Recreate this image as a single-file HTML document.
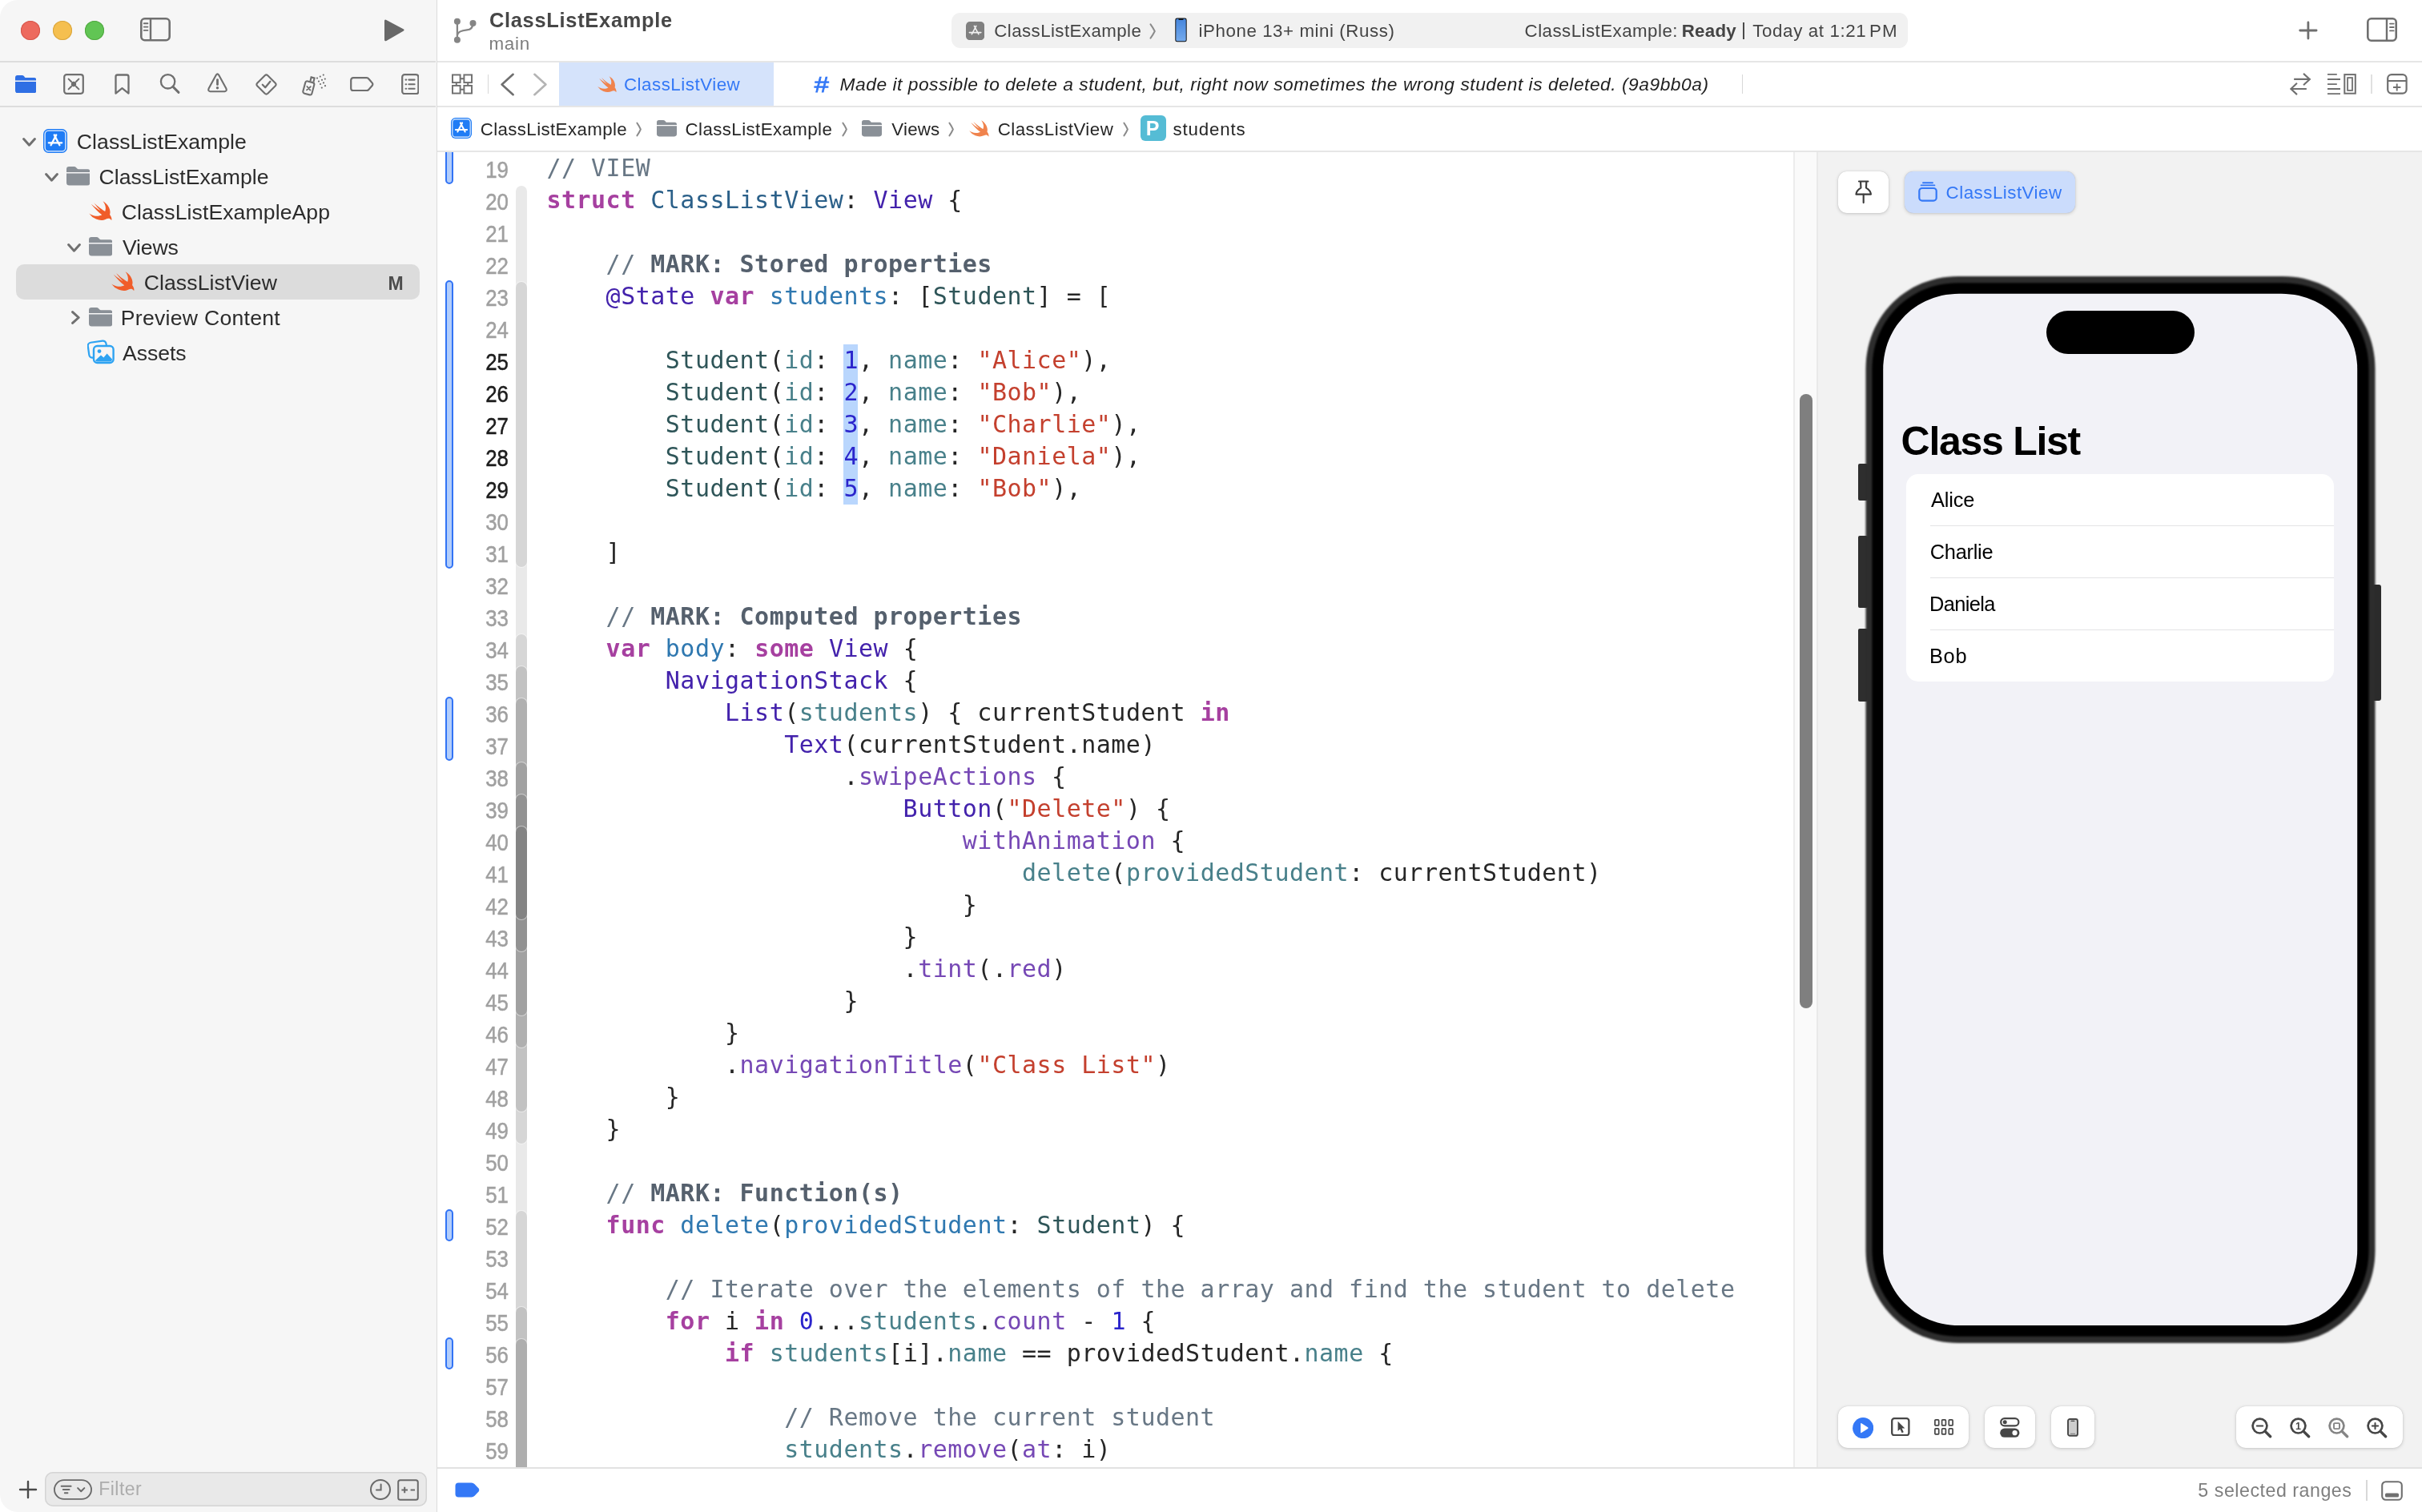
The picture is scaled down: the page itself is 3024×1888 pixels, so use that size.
<!DOCTYPE html><html lang="en"><head><meta charset="utf-8"><title>ClassListExample — ClassListView.swift</title>
<style>html,body{margin:0;padding:0}body{width:3024px;height:1888px;position:relative;overflow:hidden;background:#fff;font-family:"Liberation Sans", sans-serif;-webkit-font-smoothing:antialiased}#win{position:absolute;left:0;top:0;width:3024px;height:1888px;overflow:hidden;border-radius:22px;background:#fff;opacity:.9999}.code{font-family:"DejaVu Sans Mono", "Liberation Mono", monospace}.k{color:#a640a0;font-weight:bold}.c{color:#687785}.m{color:#55606d;font-weight:bold}.s{color:#c4402e}.n{color:#2b25cc}.td{color:#2b6089}.d{color:#2f78b0}.pc{color:#2e5558}.pf{color:#48808a}.oc{color:#4322ac}.of{color:#7648b5}</style></head><body><div id="win">
<div style="position:absolute;left:0px;top:0px;width:545px;height:1888px;background:#f6f6f6"></div>
<div style="position:absolute;left:544.6px;top:0px;width:1.5px;height:1888px;background:#dcdcdc"></div>
<div style="position:absolute;left:0px;top:76px;width:544px;height:2px;background:#dddddd"></div>
<div style="position:absolute;left:0px;top:132px;width:544px;height:2px;background:#dddddd"></div>
<div style="position:absolute;left:25.700000000000003px;top:25.700000000000003px;width:24px;height:24px;border-radius:50%;background:#ed6a5e;box-shadow:inset 0 0 0 1px #d5574c"></div>
<div style="position:absolute;left:65.8px;top:25.700000000000003px;width:24px;height:24px;border-radius:50%;background:#f5bf4f;box-shadow:inset 0 0 0 1px #d9a53e"></div>
<div style="position:absolute;left:105.8px;top:25.700000000000003px;width:24px;height:24px;border-radius:50%;background:#61c554;box-shadow:inset 0 0 0 1px #52a842"></div>
<svg style="position:absolute;left:175.3px;top:22.3px" width="38" height="29.5" viewBox="0 0 38 29.5" ><rect x="1.3" y="1.3" width="35.4" height="26.9" rx="4.4" fill="none" stroke="#707070" stroke-width="2.6"/><path d="M13 1.3V28.2" stroke="#707070" stroke-width="2.4"/><path d="M4.8 7.2H9.4M4.8 11.6H9.4M4.8 15.9H9.4" stroke="#707070" stroke-width="1.9" stroke-linecap="round"/></svg>
<svg style="position:absolute;left:478px;top:23px" width="29" height="30" viewBox="0 0 29 30" ><path d="M2 3.2Q2 0.6 4.4 1.9L25.6 13.2Q27.6 14.4 25.6 15.7L4.4 27.9Q2 29.2 2 26.6Z" fill="#686868"/></svg>
<svg style="position:absolute;left:18.8px;top:93.6px" width="26.4" height="22.4" viewBox="0 0 30 24" preserveAspectRatio="none"><path fill="#2f6fe4" d="M0 3.2Q0 0 3.2 0H9.6Q11.4 0 12.4 1.2L13.6 2.6Q14.2 3.2 15.2 3.2H26.8Q30 3.2 30 6.4V7H0Z"/><path fill="#2f6fe4" d="M0 8.6H30V20.4Q30 24 26.4 24H3.6Q0 24 0 20.4Z"/></svg>
<svg style="position:absolute;left:79px;top:91.8px" width="26" height="26" viewBox="0 0 26 26" ><rect x="1.2" y="1.2" width="23.6" height="23.6" rx="3" fill="none" stroke="#6f6f6f" stroke-width="2.2"/><path d="M6.6 6.6 10 10M19.4 6.6 16 10M6.6 19.4 10 16M19.4 19.4 16 16" stroke="#6f6f6f" stroke-width="2" stroke-linecap="round"/><circle cx="13" cy="13" r="3.2" fill="#6f6f6f"/></svg>
<svg style="position:absolute;left:142.6px;top:91.8px" width="19" height="27" viewBox="0 0 19 27" ><path d="M1.5 3.8Q1.5 1.5 3.8 1.5H15.2Q17.5 1.5 17.5 3.8V24.6L9.5 18.2 1.5 24.6Z" fill="none" stroke="#6f6f6f" stroke-width="2.3" stroke-linejoin="round"/></svg>
<svg style="position:absolute;left:199px;top:91.4px" width="27" height="27" viewBox="0 0 27 27" ><circle cx="10.6" cy="10.8" r="8.7" fill="none" stroke="#6f6f6f" stroke-width="2.3"/><path d="M17 17.4 24 24.4" stroke="#6f6f6f" stroke-width="2.9" stroke-linecap="round"/></svg>
<svg style="position:absolute;left:259.4px;top:91.4px" width="25" height="25" viewBox="0 0 25 25" ><path d="M10.9 2.6Q12.5 0.2 14.1 2.6L23.4 19.6Q24.6 22.9 21.6 23.2H3.4Q0.4 22.9 1.6 19.6Z" fill="none" stroke="#6f6f6f" stroke-width="2.1" stroke-linejoin="round"/><path d="M12.5 8.6V14.6" stroke="#6f6f6f" stroke-width="2.8" stroke-linecap="round"/><circle cx="12.5" cy="18.8" r="1.7" fill="#6f6f6f"/></svg>
<svg style="position:absolute;left:318.6px;top:91.6px" width="27" height="27" viewBox="0 0 27 27" ><path d="M11.7 2.2Q13.5 0.6 15.3 2.2L24.8 11.7Q26.4 13.5 24.8 15.3L15.3 24.8Q13.5 26.4 11.7 24.8L2.2 15.3Q0.6 13.5 2.2 11.7Z" fill="none" stroke="#6f6f6f" stroke-width="2.1"/><path d="M8.8 13.8 12.2 17.2 18.4 9.8" fill="none" stroke="#6f6f6f" stroke-width="2.3" stroke-linecap="round" stroke-linejoin="round"/></svg>
<svg style="position:absolute;left:377px;top:91px" width="32" height="29" viewBox="0 0 32 29" ><g fill="none" stroke="#6f6f6f" stroke-width="2.1"><rect x="2.6" y="11" width="11.4" height="15.8" rx="2.4" transform="rotate(15 8.3 19)"/><path d="M10.4 10.4 11.6 5.4 15.6 6.4 14.4 11.4"/></g><path d="M6.4 17 10.4 21.6M10.8 17.2 6 21.4" stroke="#6f6f6f" stroke-width="1.8" stroke-linecap="round"/><g fill="#6f6f6f"><circle cx="19" cy="6.6" r="1.1"/><circle cx="22.8" cy="4.6" r="1.1"/><circle cx="26.8" cy="2.6" r="1.1"/><circle cx="21" cy="10.6" r="1.1"/><circle cx="25" cy="8.8" r="1.1"/><circle cx="28.8" cy="7.6" r="1.1"/><circle cx="23" cy="14" r="1.1"/><circle cx="27" cy="12.4" r="1.1"/><circle cx="24.8" cy="18.6" r="1.1"/><circle cx="29" cy="16.2" r="1.1"/></g></svg>
<svg style="position:absolute;left:436.8px;top:95.8px" width="30" height="18.4" viewBox="0 0 30 18.4" ><path d="M4.2 1.2H20.6Q22.6 1.2 23.6 2.8L27.8 7.6Q28.9 9.2 27.8 10.8L23.6 15.6Q22.6 17.2 20.6 17.2H4.2Q1.2 17.2 1.2 14.2V4.2Q1.2 1.2 4.2 1.2Z" fill="none" stroke="#6f6f6f" stroke-width="2.2"/></svg>
<svg style="position:absolute;left:500.6px;top:91.8px" width="22.6" height="26.4" viewBox="0 0 22.6 26.4" ><rect x="1.2" y="1.2" width="20.2" height="24" rx="3" fill="none" stroke="#6f6f6f" stroke-width="2.2"/><path d="M9.4 7.6H16.6M9.4 13.2H16.6M9.4 18.8H16.6" stroke="#6f6f6f" stroke-width="2.1" stroke-linecap="round"/><path d="M5.6 7.6H6.2M5.6 13.2H6.2M5.6 18.8H6.2" stroke="#6f6f6f" stroke-width="2.1" stroke-linecap="round"/></svg>
<div style="position:absolute;left:20px;top:330px;width:504px;height:44px;background:#dcdcdc;border-radius:10px"></div>
<svg style="position:absolute;left:27.5px;top:171.5px" width="17" height="11" viewBox="0 0 17 11" ><path d="M1.6 1.6 8.5 9.2 15.4 1.6" fill="none" stroke="#707070" stroke-width="3" stroke-linecap="round" stroke-linejoin="round"/></svg>
<svg style="position:absolute;left:54px;top:161px" width="30" height="30" viewBox="0 0 30 30" ><rect x="0" y="0" width="30" height="30" rx="6.5" fill="#1f7cf5"/><rect x="2.1" y="2.1" width="25.8" height="25.8" rx="4.6" fill="none" stroke="#ffffff" stroke-width="1.3" opacity=".9"/><g stroke="#fff" stroke-width="2.3" stroke-linecap="round" fill="none"><path d="M16.3 7.4 9.6 20.2"/><path d="M13.7 7.4 20.4 20.2"/><path d="M6.8 17.3H23.2"/></g></svg>
<div  style="position:absolute;left:95.87px;top:164px;font-size:26.6px;line-height:26.6px;color:#2c2c2c;white-space:pre;letter-spacing:0.044px;">ClassListExample</div>
<svg style="position:absolute;left:55.5px;top:215.5px" width="17" height="11" viewBox="0 0 17 11" ><path d="M1.6 1.6 8.5 9.2 15.4 1.6" fill="none" stroke="#707070" stroke-width="3" stroke-linecap="round" stroke-linejoin="round"/></svg>
<svg style="position:absolute;left:82.6px;top:208.4px" width="29.4" height="23.6" viewBox="0 0 30 24" preserveAspectRatio="none"><path fill="#8a9097" d="M0 3.2Q0 0 3.2 0H9.6Q11.4 0 12.4 1.2L13.6 2.6Q14.2 3.2 15.2 3.2H26.8Q30 3.2 30 6.4V7H0Z"/><path fill="#8a9097" d="M0 8.6H30V20.4Q30 24 26.4 24H3.6Q0 24 0 20.4Z"/></svg>
<div  style="position:absolute;left:123.47px;top:208px;font-size:26.6px;line-height:26.6px;color:#2c2c2c;white-space:pre;letter-spacing:0.044px;">ClassListExample</div>
<svg style="position:absolute;left:111px;top:251px" width="29" height="25" viewBox="2.3 3.3 18.6 17.0" preserveAspectRatio="none"><path fill="#f05d2a" d="M13.543 3.41c4.114 2.47 6.545 7.162 5.549 11.131-.024.093-.05.181-.076.272l.002.001c2.062 2.538 1.5 5.258 1.236 4.745-1.072-2.086-3.066-1.568-4.088-1.043a6.803 6.803 0 0 1-.281.158l-.02.012-.002.002c-2.115 1.123-4.957 1.205-7.812-.022a12.568 12.568 0 0 1-5.64-4.838c.649.48 1.35.902 2.097 1.252 3.019 1.414 6.051 1.311 8.197-.002C9.651 12.73 7.101 9.67 5.146 7.191a10.628 10.628 0 0 1-1.005-1.384c2.34 2.142 6.038 4.83 7.365 5.576C8.69 8.408 6.208 4.743 6.324 4.86c4.436 4.47 8.528 6.996 8.528 6.996.154.085.27.154.36.213.085-.215.16-.437.224-.668.708-2.588-.09-5.548-1.893-7.992z"/></svg>
<div  style="position:absolute;left:151.67px;top:252px;font-size:26.6px;line-height:26.6px;color:#2c2c2c;white-space:pre;letter-spacing:0.095px;">ClassListExampleApp</div>
<svg style="position:absolute;left:83.5px;top:303.5px" width="17" height="11" viewBox="0 0 17 11" ><path d="M1.6 1.6 8.5 9.2 15.4 1.6" fill="none" stroke="#707070" stroke-width="3" stroke-linecap="round" stroke-linejoin="round"/></svg>
<svg style="position:absolute;left:110.8px;top:296.4px" width="29.4" height="23.6" viewBox="0 0 30 24" preserveAspectRatio="none"><path fill="#8a9097" d="M0 3.2Q0 0 3.2 0H9.6Q11.4 0 12.4 1.2L13.6 2.6Q14.2 3.2 15.2 3.2H26.8Q30 3.2 30 6.4V7H0Z"/><path fill="#8a9097" d="M0 8.6H30V20.4Q30 24 26.4 24H3.6Q0 24 0 20.4Z"/></svg>
<div  style="position:absolute;left:152.93px;top:296px;font-size:26.6px;line-height:26.6px;color:#2c2c2c;white-space:pre;letter-spacing:-0.123px;">Views</div>
<svg style="position:absolute;left:139px;top:339px" width="29" height="25" viewBox="2.3 3.3 18.6 17.0" preserveAspectRatio="none"><path fill="#f05d2a" d="M13.543 3.41c4.114 2.47 6.545 7.162 5.549 11.131-.024.093-.05.181-.076.272l.002.001c2.062 2.538 1.5 5.258 1.236 4.745-1.072-2.086-3.066-1.568-4.088-1.043a6.803 6.803 0 0 1-.281.158l-.02.012-.002.002c-2.115 1.123-4.957 1.205-7.812-.022a12.568 12.568 0 0 1-5.64-4.838c.649.48 1.35.902 2.097 1.252 3.019 1.414 6.051 1.311 8.197-.002C9.651 12.73 7.101 9.67 5.146 7.191a10.628 10.628 0 0 1-1.005-1.384c2.34 2.142 6.038 4.83 7.365 5.576C8.69 8.408 6.208 4.743 6.324 4.86c4.436 4.47 8.528 6.996 8.528 6.996.154.085.27.154.36.213.085-.215.16-.437.224-.668.708-2.588-.09-5.548-1.893-7.992z"/></svg>
<div  style="position:absolute;left:179.67px;top:340px;font-size:26.6px;line-height:26.6px;color:#2c2c2c;white-space:pre;letter-spacing:0.095px;">ClassListView</div>
<div  style="position:absolute;left:484.5px;top:343px;font-size:23px;line-height:23px;color:#4d4d4d;white-space:pre;font-weight:700;">M</div>
<svg style="position:absolute;left:88.5px;top:388px" width="11" height="17" viewBox="0 0 11 17" ><path d="M1.6 1.6 9.2 8.5 1.6 15.4" fill="none" stroke="#707070" stroke-width="3" stroke-linecap="round" stroke-linejoin="round"/></svg>
<svg style="position:absolute;left:110.8px;top:384.4px" width="29.4" height="23.6" viewBox="0 0 30 24" preserveAspectRatio="none"><path fill="#8a9097" d="M0 3.2Q0 0 3.2 0H9.6Q11.4 0 12.4 1.2L13.6 2.6Q14.2 3.2 15.2 3.2H26.8Q30 3.2 30 6.4V7H0Z"/><path fill="#8a9097" d="M0 8.6H30V20.4Q30 24 26.4 24H3.6Q0 24 0 20.4Z"/></svg>
<div  style="position:absolute;left:150.87px;top:384px;font-size:26.6px;line-height:26.6px;color:#2c2c2c;white-space:pre;letter-spacing:0.27px;">Preview Content</div>
<svg style="position:absolute;left:109px;top:424px" width="34" height="31" viewBox="0 0 34 31" ><rect x="1.4" y="2.6" width="23" height="19" rx="4" fill="#f6f6f6" stroke="#2ea3f2" stroke-width="2.2" transform="rotate(-8 13 12)"/><rect x="8" y="8" width="24.6" height="21" rx="4.4" fill="#f6f6f6" stroke="#2ea3f2" stroke-width="2.4"/><circle cx="15" cy="14.6" r="2.4" fill="#2ea3f2"/><path d="M10 26 17 19.4 20.4 22.4 24.6 17.6 31 24.4V25Q31 27.4 28.6 27.4H12.4Q10.4 27.4 10 26Z" fill="#2ea3f2"/></svg>
<div  style="position:absolute;left:153.0px;top:428px;font-size:26.6px;line-height:26.6px;color:#2c2c2c;white-space:pre;letter-spacing:-0.054px;">Assets</div>
<svg style="position:absolute;left:23px;top:1848px" width="24" height="24" viewBox="0 0 24 24" ><path d="M12 2V22M2 12H22" stroke="#4a4a4a" stroke-width="2.4" stroke-linecap="round"/></svg>
<div style="position:absolute;left:56px;top:1838px;width:477px;height:43px;background:#e9e9e9;border-radius:10px;box-shadow:inset 0 0 0 1.5px #d4d4d4"></div>
<svg style="position:absolute;left:65px;top:1847px" width="52" height="26" viewBox="0 0 52 28" ><rect x="1.2" y="1.2" width="49.6" height="25.6" rx="12.8" fill="none" stroke="#6a6a6a" stroke-width="2"/><path d="M10.5 9.4H23.5M12.8 14H21.2M15 18.6H19" stroke="#6a6a6a" stroke-width="2" stroke-linecap="round"/><path d="M32.6 12 37 16.4 41.4 12" fill="none" stroke="#6a6a6a" stroke-width="2.2" stroke-linecap="round" stroke-linejoin="round"/></svg>
<div  style="position:absolute;left:123.26px;top:1848px;font-size:23px;line-height:23px;color:#acacac;white-space:pre;letter-spacing:0.474px;">Filter</div>
<svg style="position:absolute;left:461px;top:1846px" width="28" height="28" viewBox="0 0 28 28" ><circle cx="14" cy="14" r="12" fill="none" stroke="#6a6a6a" stroke-width="2"/><path d="M14.6 7.4V14.6H9" fill="none" stroke="#6a6a6a" stroke-width="2" stroke-linecap="round"/></svg>
<svg style="position:absolute;left:496px;top:1847px" width="27" height="27" viewBox="0 0 27 27" ><rect x="1.2" y="1.2" width="24.6" height="24.6" rx="2.6" fill="none" stroke="#6a6a6a" stroke-width="2"/><path d="M5.4 13.5H13M9.2 9.7V17.3M16.6 13.5H22" stroke="#6a6a6a" stroke-width="2" stroke-linecap="butt"/></svg>
<div style="position:absolute;left:546px;top:76px;width:2478px;height:2px;background:#e6e6e6"></div>
<div style="position:absolute;left:546px;top:132px;width:2478px;height:2px;background:#e6e6e6"></div>
<div style="position:absolute;left:546px;top:188px;width:2478px;height:2px;background:#e6e6e6"></div>
<svg style="position:absolute;left:565px;top:21px" width="32" height="34" viewBox="0 0 32 34" ><g fill="#858585"><circle cx="5.9" cy="5.7" r="4"/><circle cx="5.9" cy="28.8" r="4"/><circle cx="25.5" cy="7.9" r="4"/></g><path d="M5.9 5.7V28.8M25.5 7.9Q25.5 15.6 18 16.4Q6.6 17.4 5.9 23" fill="none" stroke="#858585" stroke-width="2.3"/></svg>
<div  style="position:absolute;left:610.88px;top:13px;font-size:25.4px;line-height:25.4px;color:#474747;white-space:pre;font-weight:700;letter-spacing:0.732px;">ClassListExample</div>
<div  style="position:absolute;left:610.44px;top:44px;font-size:22.4px;line-height:22.4px;color:#7d7d7d;white-space:pre;letter-spacing:0.735px;">main</div>
<div style="position:absolute;left:1188px;top:16px;width:1193.6px;height:44px;background:#f1f1f1;border-radius:11px"></div>
<svg style="position:absolute;left:1206px;top:26.6px" width="23.2" height="23.2" viewBox="0 0 30 30" ><rect width="30" height="30" rx="6.5" fill="#808080"/><g stroke="#f1f1f1" stroke-width="2" stroke-linecap="round" fill="none"><path d="M16.6 7 9.4 20.4M13.4 7 20.6 20.4M5.6 17.6H24.4"/></g></svg>
<div  style="position:absolute;left:1241.29px;top:28px;font-size:22.3px;line-height:22.3px;color:#444444;white-space:pre;letter-spacing:0.422px;">ClassListExample</div>
<svg style="position:absolute;left:1435.4px;top:28.6px" width="8.4" height="20" viewBox="0 0 8.4 20" ><path d="M1.5 1.4Q4.6 5.6 6.8 10Q4.6 14.4 1.5 18.6" fill="none" stroke="#8a8a8a" stroke-width="2" stroke-linecap="round" stroke-linejoin="round"/></svg>
<svg style="position:absolute;left:1466.6px;top:22.4px" width="15" height="31" viewBox="0 0 15 31" ><defs><linearGradient id="pg" x1="0" y1="0" x2="0" y2="1"><stop offset="0" stop-color="#4585dc"/><stop offset="1" stop-color="#74aaed"/></linearGradient></defs><rect x="0.3" y="0.5" width="14.4" height="29.8" rx="2.4" fill="#111"/><rect x="1.3" y="1.5" width="12.4" height="27.8" rx="1.5" fill="url(#pg)"/><path d="M4.4 1.2H10.6V2Q10.6 2.9 9.7 2.9H5.3Q4.4 2.9 4.4 2Z" fill="#111"/></svg>
<div  style="position:absolute;left:1496.55px;top:28px;font-size:22.3px;line-height:22.3px;color:#444444;white-space:pre;letter-spacing:0.568px;">iPhone 13+ mini (Russ)</div>
<div  style="position:absolute;left:1903.59px;top:28px;font-size:22.3px;line-height:22.3px;color:#444444;white-space:pre;letter-spacing:0.469px;">ClassListExample:</div>
<div  style="position:absolute;left:2099.65px;top:28px;font-size:22.3px;line-height:22.3px;color:#444444;white-space:pre;font-weight:700;letter-spacing:0.301px;">Ready</div>
<div style="position:absolute;left:2176.4px;top:27.8px;width:2px;height:20.8px;background:#4a4a4a"></div>
<div  style="position:absolute;left:2188.25px;top:28px;font-size:22.3px;line-height:22.3px;color:#444444;white-space:pre;letter-spacing:0.637px;">Today at 1:21</div>
<div  style="position:absolute;left:2334.02px;top:28px;font-size:22.3px;line-height:22.3px;color:#444444;white-space:pre;letter-spacing:1.218px;">PM</div>
<svg style="position:absolute;left:2869px;top:25px" width="26" height="26" viewBox="0 0 26 26" ><path d="M12.9 2.9V23.1M2.7 13H23.1" stroke="#6f6f6f" stroke-width="2.8" stroke-linecap="round"/></svg>
<svg style="position:absolute;left:2955px;top:22px" width="38" height="30" viewBox="0 0 38 30" ><rect x="1.3" y="1.3" width="35.4" height="27.4" rx="4.4" fill="none" stroke="#6f6f6f" stroke-width="2.6"/><path d="M25 1.3V28.7" stroke="#6f6f6f" stroke-width="2.4"/><path d="M29 7.6H33.6M29 12H33.6M29 16.4H33.6" stroke="#6f6f6f" stroke-width="1.9" stroke-linecap="round"/></svg>
<svg style="position:absolute;left:564px;top:92px" width="26" height="26" viewBox="0 0 27 26" ><g fill="none" stroke="#6f6f6f" stroke-width="2"><rect x="1" y="1" width="10" height="10"/><rect x="16" y="1" width="10" height="10"/><rect x="1" y="15" width="10" height="10"/><rect x="16" y="15" width="10" height="10"/></g><path d="M11 6H16M6 11V15M21 11V15M11 20H16" stroke="#6f6f6f" stroke-width="2"/></svg>
<div style="position:absolute;left:608.5px;top:93px;width:1.5px;height:24px;background:#d8d8d8"></div>
<svg style="position:absolute;left:624px;top:90.5px" width="19" height="29" viewBox="0 0 19 29" ><path d="M16.6 1.8 2.6 14.5 16.6 27.2" fill="none" stroke="#6f6f6f" stroke-width="2.6" stroke-linecap="round" stroke-linejoin="round"/></svg>
<svg style="position:absolute;left:665px;top:90.5px" width="19" height="29" viewBox="0 0 19 29" ><path d="M2.4 1.8 16.4 14.5 2.4 27.2" fill="none" stroke="#b4b4b4" stroke-width="2.6" stroke-linecap="round" stroke-linejoin="round"/></svg>
<div style="position:absolute;left:698px;top:78px;width:268px;height:54px;background:#d5e3fb"></div>
<svg style="position:absolute;left:746.4px;top:95px" width="24" height="21" viewBox="2.3 3.3 18.6 17.0" preserveAspectRatio="none"><path fill="#f0834d" d="M13.543 3.41c4.114 2.47 6.545 7.162 5.549 11.131-.024.093-.05.181-.076.272l.002.001c2.062 2.538 1.5 5.258 1.236 4.745-1.072-2.086-3.066-1.568-4.088-1.043a6.803 6.803 0 0 1-.281.158l-.02.012-.002.002c-2.115 1.123-4.957 1.205-7.812-.022a12.568 12.568 0 0 1-5.64-4.838c.649.48 1.35.902 2.097 1.252 3.019 1.414 6.051 1.311 8.197-.002C9.651 12.73 7.101 9.67 5.146 7.191a10.628 10.628 0 0 1-1.005-1.384c2.34 2.142 6.038 4.83 7.365 5.576C8.69 8.408 6.208 4.743 6.324 4.86c4.436 4.47 8.528 6.996 8.528 6.996.154.085.27.154.36.213.085-.215.16-.437.224-.668.708-2.588-.09-5.548-1.893-7.992z"/></svg>
<div  style="position:absolute;left:778.88px;top:95px;font-size:22.4px;line-height:22.4px;color:#3478f6;white-space:pre;letter-spacing:0.493px;">ClassListView</div>
<svg style="position:absolute;left:1012px;top:88px" width="30" height="34" viewBox="0 0 30 34" ><text x="4.2" y="27" font-size="27.4" font-style="italic" textLength="18.2" lengthAdjust="spacingAndGlyphs" fill="#3478f6" stroke="#3478f6" stroke-width="0.75" font-family="Liberation Sans, sans-serif">#</text></svg>
<div  style="position:absolute;left:1048.52px;top:94px;font-size:22.8px;line-height:22.8px;color:#1f1f1f;white-space:pre;letter-spacing:0.512px;font-style:italic;">Made it possible to delete a student, but, right now sometimes the wrong student is deleted. (9a9bb0a)</div>
<div style="position:absolute;left:2174.5px;top:93px;width:1.5px;height:24px;background:#d8d8d8"></div>
<svg style="position:absolute;left:2858px;top:90px" width="30" height="30" viewBox="0 0 30 30" ><path d="M7.2 8.9H25.6M18.8 2.6 25.8 8.9 18.8 15.6M20.8 21H2.6M9.2 14.6 2.4 21 9.2 27.4" fill="none" stroke="#6f6f6f" stroke-width="2.1" stroke-linecap="square" stroke-linejoin="miter"/></svg>
<svg style="position:absolute;left:2905px;top:91px" width="38" height="28" viewBox="0 0 38 28" ><path d="M1 1.9H12.8M1 8H17M1 14.1H12.8M1 20H17M1 26.1H17" stroke="#6f6f6f" stroke-width="1.9"/><rect x="22.3" y="2.1" width="13.5" height="23.6" fill="none" stroke="#6f6f6f" stroke-width="2"/><rect x="26.1" y="6.1" width="5.9" height="15.8" fill="none" stroke="#6f6f6f" stroke-width="1.8"/></svg>
<div style="position:absolute;left:2960px;top:93px;width:1.6px;height:23.6px;background:#e0e0e0"></div>
<svg style="position:absolute;left:2979px;top:91px" width="28" height="28" viewBox="0 0 28 28" ><rect x="2.2" y="2.2" width="23.4" height="23.4" rx="4.8" fill="none" stroke="#6f6f6f" stroke-width="2.2"/><path d="M2.2 9.9H25.6" stroke="#6f6f6f" stroke-width="2"/><path d="M13.7 13.4V22.6M9 18H18.4" stroke="#6f6f6f" stroke-width="1.9" stroke-linecap="butt"/></svg>
<svg style="position:absolute;left:562.6px;top:147.4px" width="26" height="26" viewBox="0 0 30 30" ><rect x="0" y="0" width="30" height="30" rx="6.5" fill="#1f7cf5"/><rect x="2.1" y="2.1" width="25.8" height="25.8" rx="4.6" fill="none" stroke="#ffffff" stroke-width="1.3" opacity=".9"/><g stroke="#fff" stroke-width="2.3" stroke-linecap="round" fill="none"><path d="M16.3 7.4 9.6 20.2"/><path d="M13.7 7.4 20.4 20.2"/><path d="M6.8 17.3H23.2"/></g></svg>
<div  style="position:absolute;left:599.68px;top:151px;font-size:22.3px;line-height:22.3px;color:#262626;white-space:pre;letter-spacing:0.389px;">ClassListExample</div>
<svg style="position:absolute;left:794.1px;top:152px" width="7.8" height="19" viewBox="0 0 9 21" ><path d="M1.6 1.4Q4.6 5.6 6.8 10.5Q4.6 15.4 1.6 19.6" fill="none" stroke="#8a8a8a" stroke-width="2.2" stroke-linecap="round" stroke-linejoin="round"/></svg>
<svg style="position:absolute;left:819.8px;top:150.2px" width="25" height="20.4" viewBox="0 0 30 24" preserveAspectRatio="none"><path fill="#8a9097" d="M0 3.2Q0 0 3.2 0H9.6Q11.4 0 12.4 1.2L13.6 2.6Q14.2 3.2 15.2 3.2H26.8Q30 3.2 30 6.4V7H0Z"/><path fill="#8a9097" d="M0 8.6H30V20.4Q30 24 26.4 24H3.6Q0 24 0 20.4Z"/></svg>
<div  style="position:absolute;left:855.59px;top:151px;font-size:22.3px;line-height:22.3px;color:#262626;white-space:pre;letter-spacing:0.402px;">ClassListExample</div>
<svg style="position:absolute;left:1051.1px;top:152px" width="7.8" height="19" viewBox="0 0 9 21" ><path d="M1.6 1.4Q4.6 5.6 6.8 10.5Q4.6 15.4 1.6 19.6" fill="none" stroke="#8a8a8a" stroke-width="2.2" stroke-linecap="round" stroke-linejoin="round"/></svg>
<svg style="position:absolute;left:1075.8px;top:150.2px" width="25" height="20.4" viewBox="0 0 30 24" preserveAspectRatio="none"><path fill="#8a9097" d="M0 3.2Q0 0 3.2 0H9.6Q11.4 0 12.4 1.2L13.6 2.6Q14.2 3.2 15.2 3.2H26.8Q30 3.2 30 6.4V7H0Z"/><path fill="#8a9097" d="M0 8.6H30V20.4Q30 24 26.4 24H3.6Q0 24 0 20.4Z"/></svg>
<div  style="position:absolute;left:1113.24px;top:151px;font-size:22.3px;line-height:22.3px;color:#262626;white-space:pre;letter-spacing:0.235px;">Views</div>
<svg style="position:absolute;left:1184.1px;top:152px" width="7.8" height="19" viewBox="0 0 9 21" ><path d="M1.6 1.4Q4.6 5.6 6.8 10.5Q4.6 15.4 1.6 19.6" fill="none" stroke="#8a8a8a" stroke-width="2.2" stroke-linecap="round" stroke-linejoin="round"/></svg>
<svg style="position:absolute;left:1210px;top:149.6px" width="25" height="21.4" viewBox="2.3 3.3 18.6 17.0" preserveAspectRatio="none"><path fill="#f0834d" d="M13.543 3.41c4.114 2.47 6.545 7.162 5.549 11.131-.024.093-.05.181-.076.272l.002.001c2.062 2.538 1.5 5.258 1.236 4.745-1.072-2.086-3.066-1.568-4.088-1.043a6.803 6.803 0 0 1-.281.158l-.02.012-.002.002c-2.115 1.123-4.957 1.205-7.812-.022a12.568 12.568 0 0 1-5.64-4.838c.649.48 1.35.902 2.097 1.252 3.019 1.414 6.051 1.311 8.197-.002C9.651 12.73 7.101 9.67 5.146 7.191a10.628 10.628 0 0 1-1.005-1.384c2.34 2.142 6.038 4.83 7.365 5.576C8.69 8.408 6.208 4.743 6.324 4.86c4.436 4.47 8.528 6.996 8.528 6.996.154.085.27.154.36.213.085-.215.16-.437.224-.668.708-2.588-.09-5.548-1.893-7.992z"/></svg>
<div  style="position:absolute;left:1245.68px;top:151px;font-size:22.3px;line-height:22.3px;color:#262626;white-space:pre;letter-spacing:0.478px;">ClassListView</div>
<svg style="position:absolute;left:1402.1px;top:152px" width="7.8" height="19" viewBox="0 0 9 21" ><path d="M1.6 1.4Q4.6 5.6 6.8 10.5Q4.6 15.4 1.6 19.6" fill="none" stroke="#8a8a8a" stroke-width="2.2" stroke-linecap="round" stroke-linejoin="round"/></svg>
<div style="position:absolute;left:1423.6px;top:143.6px;width:32.4px;height:32.4px;background:#55bcd5;border-radius:6px"></div>
<div  style="position:absolute;left:1430.78px;top:148px;font-size:25px;line-height:25px;color:#fff;white-space:pre;font-weight:700;">P</div>
<div  style="position:absolute;left:1464.39px;top:151px;font-size:22.3px;line-height:22.3px;color:#262626;white-space:pre;letter-spacing:0.871px;">students</div>
<div style="position:absolute;left:546px;top:190px;width:1694px;height:1642px;overflow:hidden;background:#fff">
<div style="position:absolute;left:506.8000000000002px;top:240px;width:18.6px;height:200px;background:#b9d6fd"></div>
<div style="position:absolute;left:10px;top:-12px;width:10px;height:52px;box-sizing:border-box;border:2px solid #3173f5;background:#b2cdfb;border-radius:5px"></div>
<div style="position:absolute;left:10px;top:160px;width:10px;height:360px;box-sizing:border-box;border:2px solid #3173f5;background:#b2cdfb;border-radius:5px"></div>
<div style="position:absolute;left:10px;top:680px;width:10px;height:80px;box-sizing:border-box;border:2px solid #3173f5;background:#b2cdfb;border-radius:5px"></div>
<div style="position:absolute;left:10px;top:1320px;width:10px;height:40px;box-sizing:border-box;border:2px solid #3173f5;background:#b2cdfb;border-radius:5px"></div>
<div style="position:absolute;left:10px;top:1480px;width:10px;height:40px;box-sizing:border-box;border:2px solid #3173f5;background:#b2cdfb;border-radius:5px"></div>
<div style="position:absolute;left:98.20000000000005px;top:42px;width:13.6px;height:2036px;background:#e9e9e9;border-radius:7px;box-shadow:0 0 0 1px rgba(255,255,255,.45)"></div>
<div style="position:absolute;left:98.20000000000005px;top:162px;width:13.6px;height:356px;background:#d6d6d6;border-radius:7px;box-shadow:0 0 0 1px rgba(255,255,255,.45)"></div>
<div style="position:absolute;left:98.20000000000005px;top:602px;width:13.6px;height:636px;background:#d6d6d6;border-radius:7px;box-shadow:0 0 0 1px rgba(255,255,255,.45)"></div>
<div style="position:absolute;left:98.20000000000005px;top:642px;width:13.6px;height:556px;background:#c2c2c2;border-radius:7px;box-shadow:0 0 0 1px rgba(255,255,255,.45)"></div>
<div style="position:absolute;left:98.20000000000005px;top:682px;width:13.6px;height:436px;background:#b0b0b0;border-radius:7px;box-shadow:0 0 0 1px rgba(255,255,255,.45)"></div>
<div style="position:absolute;left:98.20000000000005px;top:762px;width:13.6px;height:316px;background:#a1a1a1;border-radius:7px;box-shadow:0 0 0 1px rgba(255,255,255,.45)"></div>
<div style="position:absolute;left:98.20000000000005px;top:802px;width:13.6px;height:196px;background:#929292;border-radius:7px;box-shadow:0 0 0 1px rgba(255,255,255,.45)"></div>
<div style="position:absolute;left:98.20000000000005px;top:842px;width:13.6px;height:116px;background:#848484;border-radius:7px;box-shadow:0 0 0 1px rgba(255,255,255,.45)"></div>
<div style="position:absolute;left:98.20000000000005px;top:1322px;width:13.6px;height:756px;background:#d6d6d6;border-radius:7px;box-shadow:0 0 0 1px rgba(255,255,255,.45)"></div>
<div style="position:absolute;left:98.20000000000005px;top:1442px;width:13.6px;height:636px;background:#c2c2c2;border-radius:7px;box-shadow:0 0 0 1px rgba(255,255,255,.45)"></div>
<div style="position:absolute;left:98.20000000000005px;top:1482px;width:13.6px;height:596px;background:#aeaeae;border-radius:7px;box-shadow:0 0 0 1px rgba(255,255,255,.45)"></div>
<div style="position:absolute;left:-6px;width:94.89999999999998px;top:8px;font-size:29px;line-height:29px;text-align:right;color:#a0a0a0;transform:scaleX(.89);transform-origin:100% 50%;-webkit-text-stroke:0.5px #a0a0a0">19</div>
<div style="position:absolute;left:-6px;width:94.89999999999998px;top:48px;font-size:29px;line-height:29px;text-align:right;color:#a0a0a0;transform:scaleX(.89);transform-origin:100% 50%;-webkit-text-stroke:0.5px #a0a0a0">20</div>
<div style="position:absolute;left:-6px;width:94.89999999999998px;top:88px;font-size:29px;line-height:29px;text-align:right;color:#a0a0a0;transform:scaleX(.89);transform-origin:100% 50%;-webkit-text-stroke:0.5px #a0a0a0">21</div>
<div style="position:absolute;left:-6px;width:94.89999999999998px;top:128px;font-size:29px;line-height:29px;text-align:right;color:#a0a0a0;transform:scaleX(.89);transform-origin:100% 50%;-webkit-text-stroke:0.5px #a0a0a0">22</div>
<div style="position:absolute;left:-6px;width:94.89999999999998px;top:168px;font-size:29px;line-height:29px;text-align:right;color:#a0a0a0;transform:scaleX(.89);transform-origin:100% 50%;-webkit-text-stroke:0.5px #a0a0a0">23</div>
<div style="position:absolute;left:-6px;width:94.89999999999998px;top:208px;font-size:29px;line-height:29px;text-align:right;color:#a0a0a0;transform:scaleX(.89);transform-origin:100% 50%;-webkit-text-stroke:0.5px #a0a0a0">24</div>
<div style="position:absolute;left:-6px;width:94.89999999999998px;top:248px;font-size:29px;line-height:29px;text-align:right;color:#1c1c1c;transform:scaleX(.89);transform-origin:100% 50%;-webkit-text-stroke:0.5px #1c1c1c">25</div>
<div style="position:absolute;left:-6px;width:94.89999999999998px;top:288px;font-size:29px;line-height:29px;text-align:right;color:#1c1c1c;transform:scaleX(.89);transform-origin:100% 50%;-webkit-text-stroke:0.5px #1c1c1c">26</div>
<div style="position:absolute;left:-6px;width:94.89999999999998px;top:328px;font-size:29px;line-height:29px;text-align:right;color:#1c1c1c;transform:scaleX(.89);transform-origin:100% 50%;-webkit-text-stroke:0.5px #1c1c1c">27</div>
<div style="position:absolute;left:-6px;width:94.89999999999998px;top:368px;font-size:29px;line-height:29px;text-align:right;color:#1c1c1c;transform:scaleX(.89);transform-origin:100% 50%;-webkit-text-stroke:0.5px #1c1c1c">28</div>
<div style="position:absolute;left:-6px;width:94.89999999999998px;top:408px;font-size:29px;line-height:29px;text-align:right;color:#1c1c1c;transform:scaleX(.89);transform-origin:100% 50%;-webkit-text-stroke:0.5px #1c1c1c">29</div>
<div style="position:absolute;left:-6px;width:94.89999999999998px;top:448px;font-size:29px;line-height:29px;text-align:right;color:#a0a0a0;transform:scaleX(.89);transform-origin:100% 50%;-webkit-text-stroke:0.5px #a0a0a0">30</div>
<div style="position:absolute;left:-6px;width:94.89999999999998px;top:488px;font-size:29px;line-height:29px;text-align:right;color:#a0a0a0;transform:scaleX(.89);transform-origin:100% 50%;-webkit-text-stroke:0.5px #a0a0a0">31</div>
<div style="position:absolute;left:-6px;width:94.89999999999998px;top:528px;font-size:29px;line-height:29px;text-align:right;color:#a0a0a0;transform:scaleX(.89);transform-origin:100% 50%;-webkit-text-stroke:0.5px #a0a0a0">32</div>
<div style="position:absolute;left:-6px;width:94.89999999999998px;top:568px;font-size:29px;line-height:29px;text-align:right;color:#a0a0a0;transform:scaleX(.89);transform-origin:100% 50%;-webkit-text-stroke:0.5px #a0a0a0">33</div>
<div style="position:absolute;left:-6px;width:94.89999999999998px;top:608px;font-size:29px;line-height:29px;text-align:right;color:#a0a0a0;transform:scaleX(.89);transform-origin:100% 50%;-webkit-text-stroke:0.5px #a0a0a0">34</div>
<div style="position:absolute;left:-6px;width:94.89999999999998px;top:648px;font-size:29px;line-height:29px;text-align:right;color:#a0a0a0;transform:scaleX(.89);transform-origin:100% 50%;-webkit-text-stroke:0.5px #a0a0a0">35</div>
<div style="position:absolute;left:-6px;width:94.89999999999998px;top:688px;font-size:29px;line-height:29px;text-align:right;color:#a0a0a0;transform:scaleX(.89);transform-origin:100% 50%;-webkit-text-stroke:0.5px #a0a0a0">36</div>
<div style="position:absolute;left:-6px;width:94.89999999999998px;top:728px;font-size:29px;line-height:29px;text-align:right;color:#a0a0a0;transform:scaleX(.89);transform-origin:100% 50%;-webkit-text-stroke:0.5px #a0a0a0">37</div>
<div style="position:absolute;left:-6px;width:94.89999999999998px;top:768px;font-size:29px;line-height:29px;text-align:right;color:#a0a0a0;transform:scaleX(.89);transform-origin:100% 50%;-webkit-text-stroke:0.5px #a0a0a0">38</div>
<div style="position:absolute;left:-6px;width:94.89999999999998px;top:808px;font-size:29px;line-height:29px;text-align:right;color:#a0a0a0;transform:scaleX(.89);transform-origin:100% 50%;-webkit-text-stroke:0.5px #a0a0a0">39</div>
<div style="position:absolute;left:-6px;width:94.89999999999998px;top:848px;font-size:29px;line-height:29px;text-align:right;color:#a0a0a0;transform:scaleX(.89);transform-origin:100% 50%;-webkit-text-stroke:0.5px #a0a0a0">40</div>
<div style="position:absolute;left:-6px;width:94.89999999999998px;top:888px;font-size:29px;line-height:29px;text-align:right;color:#a0a0a0;transform:scaleX(.89);transform-origin:100% 50%;-webkit-text-stroke:0.5px #a0a0a0">41</div>
<div style="position:absolute;left:-6px;width:94.89999999999998px;top:928px;font-size:29px;line-height:29px;text-align:right;color:#a0a0a0;transform:scaleX(.89);transform-origin:100% 50%;-webkit-text-stroke:0.5px #a0a0a0">42</div>
<div style="position:absolute;left:-6px;width:94.89999999999998px;top:968px;font-size:29px;line-height:29px;text-align:right;color:#a0a0a0;transform:scaleX(.89);transform-origin:100% 50%;-webkit-text-stroke:0.5px #a0a0a0">43</div>
<div style="position:absolute;left:-6px;width:94.89999999999998px;top:1008px;font-size:29px;line-height:29px;text-align:right;color:#a0a0a0;transform:scaleX(.89);transform-origin:100% 50%;-webkit-text-stroke:0.5px #a0a0a0">44</div>
<div style="position:absolute;left:-6px;width:94.89999999999998px;top:1048px;font-size:29px;line-height:29px;text-align:right;color:#a0a0a0;transform:scaleX(.89);transform-origin:100% 50%;-webkit-text-stroke:0.5px #a0a0a0">45</div>
<div style="position:absolute;left:-6px;width:94.89999999999998px;top:1088px;font-size:29px;line-height:29px;text-align:right;color:#a0a0a0;transform:scaleX(.89);transform-origin:100% 50%;-webkit-text-stroke:0.5px #a0a0a0">46</div>
<div style="position:absolute;left:-6px;width:94.89999999999998px;top:1128px;font-size:29px;line-height:29px;text-align:right;color:#a0a0a0;transform:scaleX(.89);transform-origin:100% 50%;-webkit-text-stroke:0.5px #a0a0a0">47</div>
<div style="position:absolute;left:-6px;width:94.89999999999998px;top:1168px;font-size:29px;line-height:29px;text-align:right;color:#a0a0a0;transform:scaleX(.89);transform-origin:100% 50%;-webkit-text-stroke:0.5px #a0a0a0">48</div>
<div style="position:absolute;left:-6px;width:94.89999999999998px;top:1208px;font-size:29px;line-height:29px;text-align:right;color:#a0a0a0;transform:scaleX(.89);transform-origin:100% 50%;-webkit-text-stroke:0.5px #a0a0a0">49</div>
<div style="position:absolute;left:-6px;width:94.89999999999998px;top:1248px;font-size:29px;line-height:29px;text-align:right;color:#a0a0a0;transform:scaleX(.89);transform-origin:100% 50%;-webkit-text-stroke:0.5px #a0a0a0">50</div>
<div style="position:absolute;left:-6px;width:94.89999999999998px;top:1288px;font-size:29px;line-height:29px;text-align:right;color:#a0a0a0;transform:scaleX(.89);transform-origin:100% 50%;-webkit-text-stroke:0.5px #a0a0a0">51</div>
<div style="position:absolute;left:-6px;width:94.89999999999998px;top:1328px;font-size:29px;line-height:29px;text-align:right;color:#a0a0a0;transform:scaleX(.89);transform-origin:100% 50%;-webkit-text-stroke:0.5px #a0a0a0">52</div>
<div style="position:absolute;left:-6px;width:94.89999999999998px;top:1368px;font-size:29px;line-height:29px;text-align:right;color:#a0a0a0;transform:scaleX(.89);transform-origin:100% 50%;-webkit-text-stroke:0.5px #a0a0a0">53</div>
<div style="position:absolute;left:-6px;width:94.89999999999998px;top:1408px;font-size:29px;line-height:29px;text-align:right;color:#a0a0a0;transform:scaleX(.89);transform-origin:100% 50%;-webkit-text-stroke:0.5px #a0a0a0">54</div>
<div style="position:absolute;left:-6px;width:94.89999999999998px;top:1448px;font-size:29px;line-height:29px;text-align:right;color:#a0a0a0;transform:scaleX(.89);transform-origin:100% 50%;-webkit-text-stroke:0.5px #a0a0a0">55</div>
<div style="position:absolute;left:-6px;width:94.89999999999998px;top:1488px;font-size:29px;line-height:29px;text-align:right;color:#a0a0a0;transform:scaleX(.89);transform-origin:100% 50%;-webkit-text-stroke:0.5px #a0a0a0">56</div>
<div style="position:absolute;left:-6px;width:94.89999999999998px;top:1528px;font-size:29px;line-height:29px;text-align:right;color:#a0a0a0;transform:scaleX(.89);transform-origin:100% 50%;-webkit-text-stroke:0.5px #a0a0a0">57</div>
<div style="position:absolute;left:-6px;width:94.89999999999998px;top:1568px;font-size:29px;line-height:29px;text-align:right;color:#a0a0a0;transform:scaleX(.89);transform-origin:100% 50%;-webkit-text-stroke:0.5px #a0a0a0">58</div>
<div style="position:absolute;left:-6px;width:94.89999999999998px;top:1608px;font-size:29px;line-height:29px;text-align:right;color:#a0a0a0;transform:scaleX(.89);transform-origin:100% 50%;-webkit-text-stroke:0.5px #a0a0a0">59</div>
<div class="code" style="position:absolute;left:136.40px;top:5px;font-size:30px;line-height:30px;letter-spacing:0.489px;white-space:pre;color:#262626"><span class="c">// VIEW</span></div>
<div class="code" style="position:absolute;left:136.40px;top:45px;font-size:30px;line-height:30px;letter-spacing:0.489px;white-space:pre;color:#262626"><span class="k">struct</span> <span class="td">ClassListView</span>: <span class="oc">View</span> {</div>
<div class="code" style="position:absolute;left:136.40px;top:125px;font-size:30px;line-height:30px;letter-spacing:0.489px;white-space:pre;color:#262626">    <span class="c">// </span><span class="m">MARK: Stored properties</span></div>
<div class="code" style="position:absolute;left:136.40px;top:165px;font-size:30px;line-height:30px;letter-spacing:0.489px;white-space:pre;color:#262626">    <span class="oc">@State</span> <span class="k">var</span> <span class="d">students</span>: [<span class="pc">Student</span>] = [</div>
<div class="code" style="position:absolute;left:136.40px;top:245px;font-size:30px;line-height:30px;letter-spacing:0.489px;white-space:pre;color:#262626">        <span class="pc">Student</span>(<span class="pf">id</span>: <span class="n">1</span>, <span class="pf">name</span>: <span class="s">&quot;Alice&quot;</span>),</div>
<div class="code" style="position:absolute;left:136.40px;top:285px;font-size:30px;line-height:30px;letter-spacing:0.489px;white-space:pre;color:#262626">        <span class="pc">Student</span>(<span class="pf">id</span>: <span class="n">2</span>, <span class="pf">name</span>: <span class="s">&quot;Bob&quot;</span>),</div>
<div class="code" style="position:absolute;left:136.40px;top:325px;font-size:30px;line-height:30px;letter-spacing:0.489px;white-space:pre;color:#262626">        <span class="pc">Student</span>(<span class="pf">id</span>: <span class="n">3</span>, <span class="pf">name</span>: <span class="s">&quot;Charlie&quot;</span>),</div>
<div class="code" style="position:absolute;left:136.40px;top:365px;font-size:30px;line-height:30px;letter-spacing:0.489px;white-space:pre;color:#262626">        <span class="pc">Student</span>(<span class="pf">id</span>: <span class="n">4</span>, <span class="pf">name</span>: <span class="s">&quot;Daniela&quot;</span>),</div>
<div class="code" style="position:absolute;left:136.40px;top:405px;font-size:30px;line-height:30px;letter-spacing:0.489px;white-space:pre;color:#262626">        <span class="pc">Student</span>(<span class="pf">id</span>: <span class="n">5</span>, <span class="pf">name</span>: <span class="s">&quot;Bob&quot;</span>),</div>
<div class="code" style="position:absolute;left:136.40px;top:485px;font-size:30px;line-height:30px;letter-spacing:0.489px;white-space:pre;color:#262626">    ]</div>
<div class="code" style="position:absolute;left:136.40px;top:565px;font-size:30px;line-height:30px;letter-spacing:0.489px;white-space:pre;color:#262626">    <span class="c">// </span><span class="m">MARK: Computed properties</span></div>
<div class="code" style="position:absolute;left:136.40px;top:605px;font-size:30px;line-height:30px;letter-spacing:0.489px;white-space:pre;color:#262626">    <span class="k">var</span> <span class="d">body</span>: <span class="k">some</span> <span class="oc">View</span> {</div>
<div class="code" style="position:absolute;left:136.40px;top:645px;font-size:30px;line-height:30px;letter-spacing:0.489px;white-space:pre;color:#262626">        <span class="oc">NavigationStack</span> {</div>
<div class="code" style="position:absolute;left:136.40px;top:685px;font-size:30px;line-height:30px;letter-spacing:0.489px;white-space:pre;color:#262626">            <span class="oc">List</span>(<span class="pf">students</span>) { currentStudent <span class="k">in</span></div>
<div class="code" style="position:absolute;left:136.40px;top:725px;font-size:30px;line-height:30px;letter-spacing:0.489px;white-space:pre;color:#262626">                <span class="oc">Text</span>(currentStudent.name)</div>
<div class="code" style="position:absolute;left:136.40px;top:765px;font-size:30px;line-height:30px;letter-spacing:0.489px;white-space:pre;color:#262626">                    .<span class="of">swipeActions</span> {</div>
<div class="code" style="position:absolute;left:136.40px;top:805px;font-size:30px;line-height:30px;letter-spacing:0.489px;white-space:pre;color:#262626">                        <span class="oc">Button</span>(<span class="s">&quot;Delete&quot;</span>) {</div>
<div class="code" style="position:absolute;left:136.40px;top:845px;font-size:30px;line-height:30px;letter-spacing:0.489px;white-space:pre;color:#262626">                            <span class="of">withAnimation</span> {</div>
<div class="code" style="position:absolute;left:136.40px;top:885px;font-size:30px;line-height:30px;letter-spacing:0.489px;white-space:pre;color:#262626">                                <span class="pf">delete</span>(<span class="pf">providedStudent</span>: currentStudent)</div>
<div class="code" style="position:absolute;left:136.40px;top:925px;font-size:30px;line-height:30px;letter-spacing:0.489px;white-space:pre;color:#262626">                            }</div>
<div class="code" style="position:absolute;left:136.40px;top:965px;font-size:30px;line-height:30px;letter-spacing:0.489px;white-space:pre;color:#262626">                        }</div>
<div class="code" style="position:absolute;left:136.40px;top:1005px;font-size:30px;line-height:30px;letter-spacing:0.489px;white-space:pre;color:#262626">                        .<span class="of">tint</span>(.<span class="of">red</span>)</div>
<div class="code" style="position:absolute;left:136.40px;top:1045px;font-size:30px;line-height:30px;letter-spacing:0.489px;white-space:pre;color:#262626">                    }</div>
<div class="code" style="position:absolute;left:136.40px;top:1085px;font-size:30px;line-height:30px;letter-spacing:0.489px;white-space:pre;color:#262626">            }</div>
<div class="code" style="position:absolute;left:136.40px;top:1125px;font-size:30px;line-height:30px;letter-spacing:0.489px;white-space:pre;color:#262626">            .<span class="of">navigationTitle</span>(<span class="s">&quot;Class List&quot;</span>)</div>
<div class="code" style="position:absolute;left:136.40px;top:1165px;font-size:30px;line-height:30px;letter-spacing:0.489px;white-space:pre;color:#262626">        }</div>
<div class="code" style="position:absolute;left:136.40px;top:1205px;font-size:30px;line-height:30px;letter-spacing:0.489px;white-space:pre;color:#262626">    }</div>
<div class="code" style="position:absolute;left:136.40px;top:1285px;font-size:30px;line-height:30px;letter-spacing:0.489px;white-space:pre;color:#262626">    <span class="c">// </span><span class="m">MARK: Function(s)</span></div>
<div class="code" style="position:absolute;left:136.40px;top:1325px;font-size:30px;line-height:30px;letter-spacing:0.489px;white-space:pre;color:#262626">    <span class="k">func</span> <span class="d">delete</span>(<span class="d">providedStudent</span>: <span class="pc">Student</span>) {</div>
<div class="code" style="position:absolute;left:136.40px;top:1405px;font-size:30px;line-height:30px;letter-spacing:0.489px;white-space:pre;color:#262626">        <span class="c">// Iterate over the elements of the array and find the student to delete</span></div>
<div class="code" style="position:absolute;left:136.40px;top:1445px;font-size:30px;line-height:30px;letter-spacing:0.489px;white-space:pre;color:#262626">        <span class="k">for</span> i <span class="k">in</span> <span class="n">0</span>...<span class="pf">students</span>.<span class="of">count</span> - <span class="n">1</span> {</div>
<div class="code" style="position:absolute;left:136.40px;top:1485px;font-size:30px;line-height:30px;letter-spacing:0.489px;white-space:pre;color:#262626">            <span class="k">if</span> <span class="pf">students</span>[i].<span class="pf">name</span> == providedStudent.<span class="pf">name</span> {</div>
<div class="code" style="position:absolute;left:136.40px;top:1565px;font-size:30px;line-height:30px;letter-spacing:0.489px;white-space:pre;color:#262626">                <span class="c">// Remove the current student</span></div>
<div class="code" style="position:absolute;left:136.40px;top:1605px;font-size:30px;line-height:30px;letter-spacing:0.489px;white-space:pre;color:#262626">                <span class="pf">students</span>.<span class="of">remove</span>(<span class="of">at</span>: i)</div>
</div>
<div style="position:absolute;left:546px;top:1832px;width:2478px;height:2px;background:#e2e2e2"></div>
<div style="position:absolute;left:2240px;top:190px;width:30px;height:1642px;background:#fafafa"></div>
<div style="position:absolute;left:2238.6px;top:190px;width:2px;height:1642px;background:#ececec"></div>
<div style="position:absolute;left:2268.4px;top:190px;width:2px;height:1642px;background:#e9e9e9"></div>
<div style="position:absolute;left:2247px;top:491.5px;width:16px;height:767px;background:#7f7f7f;border-radius:8px"></div>
<svg style="position:absolute;left:568px;top:1851px" width="32" height="19" viewBox="0 0 32 19" ><path d="M4.5 0.5H20.6Q23 0.5 24.6 2.2L29.6 7.6Q31.2 9.5 29.6 11.4L24.6 16.8Q23 18.5 20.6 18.5H4.5Q0.5 18.5 0.5 14.5V4.5Q0.5 0.5 4.5 0.5Z" fill="#3478f6"/></svg>
<div  style="position:absolute;left:2744.37px;top:1850px;font-size:23.2px;line-height:23.2px;color:#7e7e7e;white-space:pre;letter-spacing:0.53px;">5 selected ranges</div>
<div style="position:absolute;left:2954px;top:1848px;width:1.5px;height:26px;background:#d8d8d8"></div>
<svg style="position:absolute;left:2973px;top:1848.5px" width="27" height="25" viewBox="0 0 27 25" ><rect x="1.2" y="1.2" width="24.6" height="22.6" rx="4.6" fill="none" stroke="#707070" stroke-width="2.1"/><rect x="5" y="15.6" width="17" height="5" rx="1.6" fill="#707070"/></svg>
<div style="position:absolute;left:2270px;top:190px;width:754px;height:1642px;background:#f2f2f2"></div>
<div style="position:absolute;left:2294.6px;top:214px;width:63.4px;height:52px;background:#fff;border-radius:11px;box-shadow:0 1px 4px rgba(0,0,0,.18),0 0 1px rgba(0,0,0,.2)"></div>
<svg style="position:absolute;left:2314.6px;top:225.4px" width="23.4" height="30" viewBox="0 0 25 32" ><path d="M6.4 1.6H18.6M8.6 1.6 9 10.2Q3.2 13.4 2.6 18.8H22.4Q21.8 13.4 16 10.2L16.4 1.6" fill="none" stroke="#3c3c3c" stroke-width="2.3" stroke-linejoin="round" stroke-linecap="round"/><path d="M12.5 19V30" stroke="#3c3c3c" stroke-width="2.3" stroke-linecap="round"/></svg>
<div style="position:absolute;left:2377.6px;top:214px;width:213.4px;height:52px;background:#cbdcfc;border-radius:11px;box-shadow:0 1px 4px rgba(0,0,0,.18),0 0 1px rgba(0,0,0,.2)"></div>
<svg style="position:absolute;left:2395px;top:227px" width="24" height="25" viewBox="0 0 24 25" ><rect x="1.3" y="8" width="21.4" height="15.6" rx="3.6" fill="none" stroke="#3478f6" stroke-width="2.2"/><path d="M3.6 4.4H20.4M6 1.2H18" stroke="#3478f6" stroke-width="1.9" stroke-linecap="round"/></svg>
<div  style="position:absolute;left:2429.58px;top:230px;font-size:22.4px;line-height:22.4px;color:#3478f6;white-space:pre;letter-spacing:0.468px;">ClassListView</div>
<div style="position:absolute;left:2320.3px;top:579px;width:12px;height:46px;background:#2e2e2e;border-radius:2px"></div>
<div style="position:absolute;left:2320.3px;top:669px;width:12px;height:90px;background:#2e2e2e;border-radius:2px"></div>
<div style="position:absolute;left:2320.3px;top:785px;width:12px;height:91px;background:#2e2e2e;border-radius:2px"></div>
<div style="position:absolute;left:2962px;top:729.5px;width:11px;height:145px;background:#2b2b2b;border-radius:3px"></div>
<svg style="position:absolute;left:2300px;top:330px" width="700" height="1370" viewBox="0 0 700 1370" ><g style="filter:blur(0.8px)"><path d="M29.5 131.0 29.7 124.0 30.2 117.3 31.1 110.7 32.3 104.2 33.9 97.9 35.9 91.6 38.1 85.6 40.7 79.6 43.6 73.9 46.9 68.3 50.4 63.0 54.3 57.8 58.4 52.9 62.8 48.3 67.4 43.9 72.3 39.8 77.5 35.9 82.8 32.4 88.4 29.1 94.1 26.2 100.1 23.6 106.1 21.4 112.4 19.4 118.7 17.8 125.2 16.6 131.8 15.7 138.5 15.2 145.5 15.0 549.5 15.0 556.5 15.2 563.2 15.7 569.8 16.6 576.3 17.8 582.6 19.4 588.9 21.4 594.9 23.6 600.9 26.2 606.6 29.1 612.2 32.4 617.5 35.9 622.7 39.8 627.6 43.9 632.2 48.3 636.6 52.9 640.7 57.8 644.6 63.0 648.1 68.3 651.4 73.9 654.3 79.6 656.9 85.6 659.1 91.6 661.1 97.9 662.7 104.2 663.9 110.7 664.8 117.3 665.3 124.0 665.5 131.0 665.5 1231.0 665.3 1238.0 664.8 1244.7 663.9 1251.3 662.7 1257.8 661.1 1264.1 659.1 1270.4 656.9 1276.4 654.3 1282.4 651.4 1288.1 648.1 1293.7 644.6 1299.0 640.7 1304.2 636.6 1309.1 632.2 1313.7 627.6 1318.1 622.7 1322.2 617.5 1326.1 612.2 1329.6 606.6 1332.9 600.9 1335.8 594.9 1338.4 588.9 1340.6 582.6 1342.6 576.3 1344.2 569.8 1345.4 563.2 1346.3 556.5 1346.8 549.5 1347.0 145.5 1347.0 138.5 1346.8 131.8 1346.3 125.2 1345.4 118.7 1344.2 112.4 1342.6 106.1 1340.6 100.1 1338.4 94.1 1335.8 88.4 1332.9 82.8 1329.6 77.5 1326.1 72.3 1322.2 67.4 1318.1 62.8 1313.7 58.4 1309.1 54.3 1304.2 50.4 1299.0 46.9 1293.7 43.6 1288.1 40.7 1282.4 38.1 1276.4 35.9 1270.4 33.9 1264.1 32.3 1257.8 31.1 1251.3 30.2 1244.7 29.7 1238.0 29.5 1231.0Z" fill="#2d2d2d"/><path d="M37.4 131.2 37.6 124.7 38.1 118.4 38.9 112.3 40.0 106.3 41.5 100.4 43.3 94.6 45.4 88.9 47.8 83.4 50.6 78.0 53.6 72.8 56.9 67.9 60.5 63.1 64.3 58.5 68.4 54.2 72.7 50.1 77.3 46.3 82.1 42.7 87.0 39.4 92.2 36.4 97.6 33.6 103.1 31.2 108.8 29.1 114.6 27.3 120.5 25.8 126.5 24.7 132.6 23.9 138.9 23.4 145.4 23.2 549.6 23.2 556.1 23.4 562.4 23.9 568.5 24.7 574.5 25.8 580.4 27.3 586.2 29.1 591.9 31.2 597.4 33.6 602.8 36.4 608.0 39.4 612.9 42.7 617.7 46.3 622.3 50.1 626.6 54.2 630.7 58.5 634.5 63.1 638.1 67.9 641.4 72.8 644.4 78.0 647.2 83.4 649.6 88.9 651.7 94.6 653.5 100.4 655.0 106.3 656.1 112.3 656.9 118.4 657.4 124.7 657.6 131.2 657.6 1230.8 657.4 1237.3 656.9 1243.6 656.1 1249.7 655.0 1255.7 653.5 1261.6 651.7 1267.4 649.6 1273.1 647.2 1278.6 644.4 1284.0 641.4 1289.2 638.1 1294.1 634.5 1298.9 630.7 1303.5 626.6 1307.8 622.3 1311.9 617.7 1315.7 612.9 1319.3 608.0 1322.6 602.8 1325.6 597.4 1328.4 591.9 1330.8 586.2 1332.9 580.4 1334.7 574.5 1336.2 568.5 1337.3 562.4 1338.1 556.1 1338.6 549.6 1338.8 145.4 1338.8 138.9 1338.6 132.6 1338.1 126.5 1337.3 120.5 1336.2 114.6 1334.7 108.8 1332.9 103.1 1330.8 97.6 1328.4 92.2 1325.6 87.0 1322.6 82.1 1319.3 77.3 1315.7 72.7 1311.9 68.4 1307.8 64.3 1303.5 60.5 1298.9 56.9 1294.1 53.6 1289.2 50.6 1284.0 47.8 1278.6 45.4 1273.1 43.3 1267.4 41.5 1261.6 40.0 1255.7 38.9 1249.7 38.1 1243.6 37.6 1237.3 37.4 1230.8Z" fill="#000"/></g><path d="M51.2 131.8 51.3 126.1 51.8 120.6 52.5 115.2 53.5 109.9 54.8 104.7 56.4 99.6 58.3 94.6 60.4 89.7 62.8 85.0 65.4 80.5 68.3 76.1 71.5 71.9 74.9 67.9 78.5 64.1 82.3 60.5 86.3 57.1 90.5 53.9 94.9 51.0 99.4 48.4 104.1 46.0 109.0 43.9 114.0 42.0 119.1 40.4 124.3 39.1 129.6 38.1 135.0 37.4 140.5 36.9 146.2 36.8 548.2 36.8 553.9 36.9 559.4 37.4 564.8 38.1 570.1 39.1 575.3 40.4 580.4 42.0 585.4 43.9 590.3 46.0 595.0 48.4 599.5 51.0 603.9 53.9 608.1 57.1 612.1 60.5 615.9 64.1 619.5 67.9 622.9 71.9 626.1 76.1 629.0 80.5 631.6 85.0 634.0 89.7 636.1 94.6 638.0 99.6 639.6 104.7 640.9 109.9 641.9 115.2 642.6 120.6 643.1 126.1 643.2 131.8 643.2 1230.0 643.1 1235.7 642.6 1241.2 641.9 1246.6 640.9 1251.9 639.6 1257.1 638.0 1262.2 636.1 1267.2 634.0 1272.1 631.6 1276.8 629.0 1281.3 626.1 1285.7 622.9 1289.9 619.5 1293.9 615.9 1297.7 612.1 1301.3 608.1 1304.7 603.9 1307.9 599.5 1310.8 595.0 1313.4 590.3 1315.8 585.4 1317.9 580.4 1319.8 575.3 1321.4 570.1 1322.7 564.8 1323.7 559.4 1324.4 553.9 1324.9 548.2 1325.0 146.2 1325.0 140.5 1324.9 135.0 1324.4 129.6 1323.7 124.3 1322.7 119.1 1321.4 114.0 1319.8 109.0 1317.9 104.1 1315.8 99.4 1313.4 94.9 1310.8 90.5 1307.9 86.3 1304.7 82.3 1301.3 78.5 1297.7 74.9 1293.9 71.5 1289.9 68.3 1285.7 65.4 1281.3 62.8 1276.8 60.4 1272.1 58.3 1267.2 56.4 1262.2 54.8 1257.1 53.5 1251.9 52.5 1246.6 51.8 1241.2 51.3 1235.7 51.2 1230.0Z" fill="#f2f2f7" style="filter:blur(0.5px)"/></svg>
<div style="position:absolute;left:2554.5px;top:387.6px;width:185px;height:54px;background:#000;border-radius:27px"></div>
<div  style="position:absolute;left:2373.6px;top:526px;font-size:50px;line-height:50px;color:#000;white-space:pre;font-weight:700;letter-spacing:-1.283px;">Class List</div>
<div style="position:absolute;left:2380.4px;top:591.6px;width:533.4px;height:259.4px;background:#fff;border-radius:15px"></div>
<div  style="position:absolute;left:2411.0px;top:612px;font-size:25.4px;line-height:25.4px;color:#000;white-space:pre;letter-spacing:-0.144px;">Alice</div>
<div style="position:absolute;left:2410px;top:656.0px;width:503.8px;height:1.2px;background:#e3e3e5"></div>
<div  style="position:absolute;left:2409.73px;top:677px;font-size:25.4px;line-height:25.4px;color:#000;white-space:pre;letter-spacing:-0.268px;">Charlie</div>
<div style="position:absolute;left:2410px;top:720.8px;width:503.8px;height:1.2px;background:#e3e3e5"></div>
<div  style="position:absolute;left:2408.97px;top:742px;font-size:25.4px;line-height:25.4px;color:#000;white-space:pre;letter-spacing:-0.623px;">Daniela</div>
<div style="position:absolute;left:2410px;top:785.6px;width:503.8px;height:1.2px;background:#e3e3e5"></div>
<div  style="position:absolute;left:2408.97px;top:807px;font-size:25.4px;line-height:25.4px;color:#000;white-space:pre;letter-spacing:0.7px;">Bob</div>
<div style="position:absolute;left:2294.6px;top:1756px;width:163.4px;height:52px;background:#fff;border-radius:12px;box-shadow:0 1px 4px rgba(0,0,0,.18),0 0 1px rgba(0,0,0,.2)"></div>
<div style="position:absolute;left:2477.6px;top:1756px;width:63.6px;height:52px;background:#fff;border-radius:12px;box-shadow:0 1px 4px rgba(0,0,0,.18),0 0 1px rgba(0,0,0,.2)"></div>
<div style="position:absolute;left:2560.6px;top:1756px;width:54.4px;height:52px;background:#fff;border-radius:12px;box-shadow:0 1px 4px rgba(0,0,0,.18),0 0 1px rgba(0,0,0,.2)"></div>
<div style="position:absolute;left:2792px;top:1756px;width:208.4px;height:52px;background:#fff;border-radius:12px;box-shadow:0 1px 4px rgba(0,0,0,.18),0 0 1px rgba(0,0,0,.2)"></div>
<svg style="position:absolute;left:2313px;top:1769.7px" width="26.3" height="26.3" viewBox="0 0 27 27" ><circle cx="13.5" cy="13.5" r="13.4" fill="#3478f6"/><path d="M10.4 8Q10.4 6.8 11.5 7.4L19.6 12.5Q20.6 13.5 19.6 14.4L11.5 19.6Q10.4 20.2 10.4 19Z" fill="#fff"/></svg>
<svg style="position:absolute;left:2361px;top:1770.1px" width="23.6" height="23.4" viewBox="0 0 23.6 23.4" ><rect x="1.2" y="1.2" width="21.2" height="21" rx="3" fill="none" stroke="#464646" stroke-width="2.3"/><path d="M8.6 4.8V17L11.4 14.4 13.6 19.2 15.8 18.2 13.6 13.6H17.4Z" fill="#464646"/></svg>
<svg style="position:absolute;left:2414.8px;top:1772.2px" width="24" height="20" viewBox="0 0 24 20" ><rect x="0.9" y="0.9" width="4.8" height="7" rx="1" fill="none" stroke="#464646" stroke-width="1.7"/><rect x="9.6" y="0.9" width="4.8" height="7" rx="1" fill="none" stroke="#464646" stroke-width="1.7"/><rect x="18.299999999999997" y="0.9" width="4.8" height="7" rx="1" fill="none" stroke="#464646" stroke-width="1.7"/><rect x="0.9" y="11.9" width="4.8" height="7" rx="1" fill="none" stroke="#464646" stroke-width="1.7"/><rect x="9.6" y="11.9" width="4.8" height="7" rx="1" fill="none" stroke="#464646" stroke-width="1.7"/><rect x="18.299999999999997" y="11.9" width="4.8" height="7" rx="1" fill="none" stroke="#464646" stroke-width="1.7"/></svg>
<svg style="position:absolute;left:2497px;top:1770.1px" width="24.6" height="25" viewBox="0 0 24.6 25" ><rect x="1.2" y="1.2" width="22.2" height="9.2" rx="4.6" fill="none" stroke="#464646" stroke-width="2.2"/><circle cx="6.2" cy="5.8" r="2.5" fill="#464646"/><rect x="0.2" y="13.6" width="24.2" height="11.2" rx="5.6" fill="#464646"/><circle cx="18.6" cy="19.2" r="3.1" fill="#fff"/></svg>
<svg style="position:absolute;left:2581px;top:1771.1px" width="14" height="22.8" viewBox="0 0 14 22.8" ><rect x="1" y="1" width="12" height="20.8" rx="2.4" fill="#cdcdcd" stroke="#464646" stroke-width="1.9"/><path d="M5.2 3.4H8.8" stroke="#464646" stroke-width="1.3" stroke-linecap="round"/><path d="M4.4 19.4H9.6" stroke="#8a8a8a" stroke-width="1.1" stroke-linecap="round"/></svg>
<svg style="position:absolute;left:2811px;top:1769.6px" width="26" height="26" viewBox="0 0 26 26" ><circle cx="10.5" cy="10.6" r="8.9" fill="none" stroke="#464646" stroke-width="2.7"/><path d="M17.2 17.4 23.6 23.8" stroke="#464646" stroke-width="3.4" stroke-linecap="round"/><path d="M6.8 10.6H14.2" stroke="#464646" stroke-width="2" stroke-linecap="round"/></svg>
<svg style="position:absolute;left:2859px;top:1769.6px" width="26" height="26" viewBox="0 0 26 26" ><circle cx="10.5" cy="10.6" r="8.9" fill="none" stroke="#464646" stroke-width="2.7"/><path d="M17.2 17.4 23.6 23.8" stroke="#464646" stroke-width="3.4" stroke-linecap="round"/><text x="10.4" y="14.8" font-size="12.5" font-weight="700" text-anchor="middle" fill="#464646" font-family="Liberation Sans, sans-serif">1</text></svg>
<svg style="position:absolute;left:2907px;top:1769.6px" width="26" height="26" viewBox="0 0 26 26" ><circle cx="10.5" cy="10.6" r="8.9" fill="none" stroke="#858585" stroke-width="2.7"/><path d="M17.2 17.4 23.6 23.8" stroke="#858585" stroke-width="3.4" stroke-linecap="round"/><rect x="7" y="7.1" width="7" height="7" rx="1" fill="none" stroke="#858585" stroke-width="1.9"/></svg>
<svg style="position:absolute;left:2955px;top:1769.6px" width="26" height="26" viewBox="0 0 26 26" ><circle cx="10.5" cy="10.6" r="8.9" fill="none" stroke="#464646" stroke-width="2.7"/><path d="M17.2 17.4 23.6 23.8" stroke="#464646" stroke-width="3.4" stroke-linecap="round"/><path d="M6.8 10.6H14.2M10.5 6.9V14.3" stroke="#464646" stroke-width="2" stroke-linecap="round"/></svg>
</div></body></html>
